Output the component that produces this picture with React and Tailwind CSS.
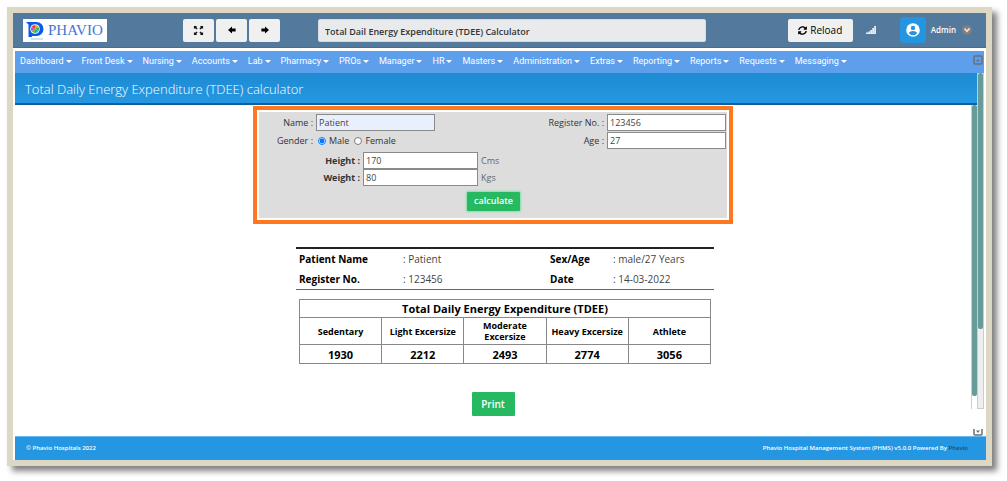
import React, { useState } from 'react';
import { FaSyncAlt } from 'react-icons/fa';

// Top navigation entries
const menuItems = [
  'Dashboard',
  'Front Desk',
  'Nursing',
  'Accounts',
  'Lab',
  'Pharmacy',
  'PROs',
  'Manager',
  'HR',
  'Masters',
  'Administration',
  'Extras',
  'Reporting',
  'Reports',
  'Requests',
  'Messaging',
];

// Activity levels with the calories per day
const results = [
  { level: 'Sedentary', value: 1930 },
  { level: 'Light Excersize', value: 2212 },
  { level: 'Moderate Excersize', value: 2493 },
  { level: 'Heavy Excersize', value: 2774 },
  { level: 'Athlete', value: 3056 },
];

const Logo = () => (
  <div className="flex h-[23px] w-[84px] items-center gap-1 bg-white pl-[3px]">
    <svg viewBox="0 0 18 20" className="h-[20px] w-[18px]" aria-hidden="true">
      <path d="M0 2h10.500a7 7 0 0 1 0 14H6v1H2.500V4.500z" fill="#0b5be6" />
      <circle cx="9" cy="9" r="4.800" fill="#fff" />
      <path d="M9 9V5a4 4 0 0 1 3.500 2z" fill="#f2a21c" />
      <path d="M9 9l3.500-2a4 4 0 0 1 0 4z" fill="#35b54a" />
      <path d="M9 9l3.500 2A4 4 0 0 1 9 13z" fill="#13b5c9" />
      <path d="M9 9v4a4 4 0 0 1-3.500-2z" fill="#5fc43f" />
      <path d="M9 9l-3.500 2a4 4 0 0 1 0-4z" fill="#d83be2" />
      <path d="M9 9L5.500 7A4 4 0 0 1 9 5z" fill="#e8452c" />
      <path d="M5 19h12" stroke="#a9c6f2" strokeWidth="1" />
    </svg>
    <span className="font-['Liberation_Serif',serif] text-[15px] leading-none text-[#3f76d6]">PHAVIO</span>
  </div>
);

const ExpandIcon = () => (
  <svg viewBox="0 0 12 12" className="h-[11px] w-[11px]" fill="#111" aria-hidden="true">
    <path d="M1 1h3.500L3.400 2.100 5 3.700 3.700 5 2.100 3.400 1 4.500z" />
    <path d="M11 1v3.500L9.900 3.400 8.300 5 7 3.700l1.600-1.600L7.500 1z" />
    <path d="M1 11V7.500l1.100 1.100L3.700 7 5 8.300 3.400 9.900 4.500 11z" />
    <path d="M11 11H7.500l1.100-1.100L7 8.300 8.300 7l1.600 1.600L11 7.500z" />
  </svg>
);

const BackIcon = () => (
  <svg viewBox="0 0 8 8" className="h-[8px] w-[8px]" fill="#000" aria-hidden="true">
    <path d="M0 4L4 .4v2.100h3.600v3H4v2.100z" />
  </svg>
);

const ForwardIcon = () => (
  <svg viewBox="0 0 8 8" className="h-[8px] w-[8px]" fill="#000" aria-hidden="true">
    <path d="M8 4L4 .4v2.100H.4v3H4v2.100z" />
  </svg>
);

const SignalIcon = () => (
  <svg viewBox="0 0 10 8" className="h-[8px] w-[10px]" fill="#e6ecf2" aria-hidden="true">
    <path d="M0 6.500h2V8H0zM2.200 5.500h1.800V8H2.200zM4.200 4h1.800v4H4.200zM6.200 2H8v6H6.200zM8.200 0H10v8H8.200z" />
    <path d="M0 7h10v1H0z" />
  </svg>
);

const UserIcon = () => (
  <svg viewBox="0 0 14 14" className="h-[14px] w-[14px]" aria-hidden="true">
    <circle cx="7" cy="7" r="6.800" fill="#fff" />
    <circle cx="7" cy="4.900" r="2.200" fill="#2496e1" />
    <path d="M2.800 10.300c.6-1.500 2.400-2.200 4.200-2.200s3.600.7 4.200 2.200A5.400 5.400 0 0 1 7 12.300a5.400 5.400 0 0 1-4.200-2z" fill="#2496e1" />
  </svg>
);

const DropIcon = () => (
  <svg viewBox="0 0 10 10" className="h-[10px] w-[10px]" aria-hidden="true">
    <circle cx="5" cy="5" r="4.800" fill="#85807f" />
    <path d="M2.600 3.600L5 6.200 7.600 3.400" fill="none" stroke="#e9e4e0" strokeWidth="1.600" />
  </svg>
);

// Small square scroll arrow
const ScrollArrow = ({ down }) => (
  <svg viewBox="0 0 10 10" className="h-[10px] w-[10px]" aria-hidden="true">
    <rect x="1" y="1" width="8" height="8" rx="1" fill="none" stroke="#6b6f78" strokeWidth="1.500" />
    <path d={down ? 'M3 4.500h4L5 7z' : 'M3 6.500h4L5 3.500z'} fill="#6b6f78" />
  </svg>
);

const toolButton = 'flex h-[23px] items-center justify-center rounded-[2px] bg-[#f0f0f0] text-black';
const fieldInput = 'h-[17px] border border-[#8a8a8a] px-[2px] text-[9px] text-[#444]';

const App = () => {
  const [formData, setFormData] = useState({
    name: 'Patient',
    registerNo: '123456',
    gender: 'male',
    age: '27',
    height: '170',
    weight: '80',
  });

  // Handle input change
  const handleChange = (e) => {
    const { name, value } = e.target;
    setFormData((prev) => ({ ...prev, [name]: value }));
  };

  return (
    <div className="flex min-h-screen flex-col bg-white pt-[7px] pr-[15px] pb-[15px] pl-[7px] font-['Open_Sans',sans-serif]">
      <div className="flex flex-1 flex-col border-[6px] border-[#dcd8c3] bg-white shadow-[5px_5px_6px_0_rgba(0,0,0,0.5)]">
        {/* Header */}
        <header className="flex h-[35px] items-center border-b border-[#456f96] bg-[#537a9d] pr-[14px] pl-[10px]">
          <Logo />
          <div className="ml-[76px] flex gap-[2px]">
            <button type="button" aria-label="Full screen" className={`${toolButton} w-[31px]`}>
              <ExpandIcon />
            </button>
            <button type="button" aria-label="Back" className={`${toolButton} w-[31px]`}>
              <BackIcon />
            </button>
            <button type="button" aria-label="Forward" className={`${toolButton} w-[31px]`}>
              <ForwardIcon />
            </button>
          </div>
          <input
            type="text"
            aria-label="Page"
            defaultValue="Total Dail Energy Expenditure (TDEE) Calculator"
            className="ml-[38px] h-[23px] w-[388px] rounded-[2px] border border-[#d5dbe0] bg-[#e9eaeb] px-[6px] pt-[2px] text-[9px] font-semibold text-[#333]"
          />
          <div className="ml-auto flex items-center">
            <button type="button" className={`${toolButton} w-[65px] gap-[3px] text-[10px] text-[#333]`}>
              <FaSyncAlt size={9} color="#000" />
              Reload
            </button>
            <span className="ml-[13px]">
              <SignalIcon />
            </span>
            <span className="ml-6 flex h-[26px] w-[26px] items-center justify-center rounded-[4px] bg-[#2496e1]">
              <UserIcon />
            </span>
            <span className="ml-[5px] text-[8px] font-semibold text-white">Admin</span>
            <span className="ml-[6px]">
              <DropIcon />
            </span>
          </div>
        </header>

        {/* Menu */}
        <nav className="mt-[3px] mr-[2px] ml-[2px] flex h-[22px] items-center bg-[#5e9fec] pr-[1px] pl-[5px] font-['Roboto',sans-serif] text-[9px] text-white">
          <ul className="flex gap-[10px]">
            {menuItems.map((item) => (
              <li key={item}>
                <a href="#" className="flex items-center gap-[2px] whitespace-nowrap">
                  {item}
                  <span className="mb-[2px] border-x-[3px] border-t-[3px] border-x-transparent border-t-white" />
                </a>
              </li>
            ))}
          </ul>
          <span className="mb-[5px] ml-auto">
            <ScrollArrow />
          </span>
        </nav>

        {/* Main area */}
        <div className="relative ml-[2px] mr-[2px] flex flex-1">
          <div className="flex flex-1 flex-col">
            <h1 className="flex h-[32px] items-center border-b-2 border-[#0d629e] bg-linear-to-b from-[#1e8bd2] to-[#2597e2] pt-[3px] pl-[10px] text-[13px] font-light text-white">
              Total Daily Energy Expenditure (TDEE) calculator
            </h1>

            <div className="flex flex-1">
              <main className="flex-1 pt-[1px]">
                <div className="mx-auto w-[480px]">
                  {/* Patient form */}
                  <form
                    onSubmit={(e) => e.preventDefault()}
                    className="border-4 border-[#ff781f] p-[2px] text-[9px] leading-[17px] text-[#333]"
                  >
                    <div className="bg-[#dddddd] pt-[2px] pr-[1px] pb-[7px] pl-[2px]">
                      <div className="flex justify-between">
                        <div className="grid grid-cols-[52px_auto] gap-x-[3px] gap-y-[1px]">
                          <label htmlFor="name" className="text-right">Name :</label>
                          <input
                            id="name"
                            name="name"
                            type="text"
                            value={formData.name}
                            onChange={handleChange}
                            className={`${fieldInput} w-[119px] bg-[#e8f0fe]`}
                          />
                          <span className="text-right">Gender :</span>
                          <div className="flex items-center gap-[5px] pl-[2px]">
                            <label className="flex items-center gap-[3px]">
                              <input
                                type="radio"
                                name="gender"
                                value="male"
                                checked={formData.gender === 'male'}
                                onChange={handleChange}
                                className="h-[8px] w-[8px]"
                              />
                              Male
                            </label>
                            <label className="flex items-center gap-[3px]">
                              <input
                                type="radio"
                                name="gender"
                                value="female"
                                checked={formData.gender === 'female'}
                                onChange={handleChange}
                                className="h-[8px] w-[8px]"
                              />
                              Female
                            </label>
                          </div>
                        </div>
                        <div className="grid grid-cols-[auto_auto] gap-x-[3px] gap-y-[1px]">
                          <label htmlFor="registerNo" className="text-right">Register No. :</label>
                          <input
                            id="registerNo"
                            name="registerNo"
                            type="text"
                            value={formData.registerNo}
                            onChange={handleChange}
                            className={`${fieldInput} w-[119px] bg-white`}
                          />
                          <label htmlFor="age" className="text-right">Age :</label>
                          <input
                            id="age"
                            name="age"
                            type="text"
                            value={formData.age}
                            onChange={handleChange}
                            className={`${fieldInput} w-[119px] bg-white`}
                          />
                        </div>
                      </div>

                      <div className="mt-[3px] grid grid-cols-[99px_115px_auto] gap-x-[3px]">
                        <label htmlFor="height" className="text-right font-bold">Height :</label>
                        <input
                          id="height"
                          name="height"
                          type="text"
                          value={formData.height}
                          onChange={handleChange}
                          className={`${fieldInput} bg-white`}
                        />
                        <span className="text-[#666]">Cms</span>
                        <label htmlFor="weight" className="text-right font-bold">Weight :</label>
                        <input
                          id="weight"
                          name="weight"
                          type="text"
                          value={formData.weight}
                          onChange={handleChange}
                          className={`${fieldInput} bg-white`}
                        />
                        <span className="text-[#666]">Kgs</span>
                      </div>

                      <div className="mt-[6px] flex justify-center">
                        <button
                          type="submit"
                          className="h-[19px] w-[53px] rounded-[1px] bg-[#27b962] pb-[2px] text-[9px] leading-none font-semibold text-white shadow-[0_0_2px_1px_#7fe3a5]"
                        >
                          calculate
                        </button>
                      </div>
                    </div>
                  </form>

                  {/* Report */}
                  <section className="mt-[23px] mr-[19px] ml-[43px]">
                    <dl className="grid grid-cols-[104px_147px_63px_auto] border-t-2 border-b border-t-[#222] border-b-[#666] pl-[3px] text-[10px] leading-[20px] text-[#444]">
                      <dt className="font-bold text-black">Patient Name</dt>
                      <dd>: Patient</dd>
                      <dt className="font-bold text-black">Sex/Age</dt>
                      <dd>: male/27 Years</dd>
                      <dt className="font-bold text-black">Register No.</dt>
                      <dd>: 123456</dd>
                      <dt className="font-bold text-black">Date</dt>
                      <dd>: 14-03-2022</dd>
                    </dl>

                    <div className="mt-[9px] px-[3px]">
                      <table className="w-full table-fixed border-collapse text-center text-black">
                        <thead>
                          <tr>
                            <th colSpan={5} className="h-[18px] border border-[#888] text-[11px] leading-[17px] font-bold">
                              Total Daily Energy Expenditure (TDEE)
                            </th>
                          </tr>
                          <tr>
                            {results.map((item) => (
                              <th key={item.level} className="h-[27px] border border-[#888] px-1 text-[9px] leading-[11px] font-bold">
                                {item.level}
                              </th>
                            ))}
                          </tr>
                        </thead>
                        <tbody>
                          <tr>
                            {results.map((item) => (
                              <td key={item.level} className="h-[19px] border border-[#888] text-[11px] leading-[17px] font-bold">
                                {item.value}
                              </td>
                            ))}
                          </tr>
                        </tbody>
                      </table>
                    </div>
                  </section>

                  <div className="mt-7 flex justify-center">
                    <button
                      type="button"
                      onClick={() => window.print()}
                      className="h-[24px] w-[43px] rounded-[1px] bg-[#27b962] text-[10px] font-semibold text-white"
                    >
                      Print
                    </button>
                  </div>
                </div>
              </main>

              {/* Inner scroll bar */}
              <div className="mb-[27px] flex w-[6px] flex-col border-l border-[#ccc]">
                <div className="h-[291px] rounded-[2px] bg-[#669b9a]" />
              </div>
            </div>
          </div>

          {/* Outer scroll bar */}
          <div className="mb-[27px] flex w-[7px] flex-col border border-t-0 border-[#ccc] bg-[#eee]">
            <div className="h-[256px] rounded-[2px] bg-[#669b9a]" />
          </div>
          <span className="absolute right-[1px] bottom-0 flex h-[7px] items-end overflow-hidden">
            <ScrollArrow down />
          </span>
        </div>

        {/* Footer */}
        <footer className="ml-[2px] flex h-[24px] items-center justify-between border-t border-[#6bb8ee] bg-[#2597e2] pr-[18px] pl-[11px] text-[6px] font-semibold text-white">
          <p>© Phavio Hospitals 2022</p>
          <p>
            Phavio Hospital Management System (PHMS) v5.0.0 Powered By{' '}
            <a href="#" className="text-[#1c4a78]">Phavio</a>
          </p>
        </footer>
      </div>
    </div>
  );
};

export default App;
